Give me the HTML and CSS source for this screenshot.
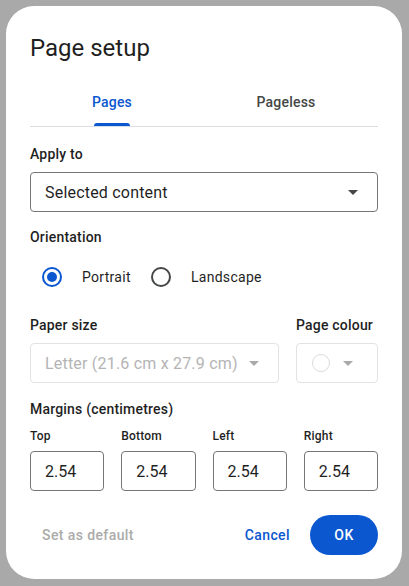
FILE: index.html
```html
<!DOCTYPE html>
<html lang="en">
<head>
<meta charset="utf-8">
<title>Page setup</title>
<link rel="stylesheet" href="styles.css">
</head>
<body>
<div class="dialog">
  <h1 class="title">Page setup</h1>

  <div class="tabs">
    <div class="tab-row">
      <div class="tab active"><span>Pages</span><span class="tab-indicator"></span></div>
      <div class="tab"><span>Pageless</span></div>
    </div>
  </div>

  <div class="label apply">Apply to</div>
  <div class="select">
    <span>Selected content</span>
    <svg class="arrow" width="10" height="5" viewBox="0 0 10 5"><polygon points="0,0 10,0 5,5" fill="#444746"/></svg>
  </div>

  <div class="label orient">Orientation</div>
  <div class="radio-row">
    <div class="radio-opt">
      <span class="radio-touch"><span class="radio-ring on"><span class="radio-dot"></span></span></span>
      <span class="radio-label">Portrait</span>
    </div>
    <div class="radio-opt">
      <span class="radio-touch"><span class="radio-ring"></span></span>
      <span class="radio-label">Landscape</span>
    </div>
  </div>

  <div class="paper-grid">
    <div class="label">Paper size</div>
    <div class="label">Page colour</div>
    <div class="select disabled">
      <span>Letter (21.6 cm x 27.9 cm)</span>
      <svg class="arrow" width="10" height="5" viewBox="0 0 10 5"><polygon points="0,0 10,0 5,5" fill="#a9a9a9"/></svg>
    </div>
    <div class="colour-box">
      <span class="swatch"></span>
      <svg class="arrow colour-arrow" width="10" height="5" viewBox="0 0 10 5"><polygon points="0,0 10,0 5,5" fill="#a9a9a9"/></svg>
    </div>
  </div>

  <div class="label margins-title">Margins (centimetres)</div>
  <div class="margin-grid">
    <div class="small-label">Top</div>
    <div class="small-label">Bottom</div>
    <div class="small-label">Left</div>
    <div class="small-label">Right</div>
    <div class="num">2.54</div>
    <div class="num">2.54</div>
    <div class="num">2.54</div>
    <div class="num">2.54</div>
  </div>

  <div class="footer">
    <button class="btn-text default-btn">Set as default</button>
    <span class="spacer"></span>
    <button class="btn-text cancel-btn">Cancel</button>
    <button class="btn-ok">OK</button>
  </div>
</div>
</body>
</html>
```

FILE: styles.css
```css
body {
  margin: 0;
  background: #a9a9a9;
  font-family: Roboto, "Liberation Sans", sans-serif;
  color: #1f1f1f;
}

.dialog {
  margin: 6px;
  width: 396px;
  height: 573px;
  box-sizing: border-box;
  background: #ffffff;
  border-radius: 28px;
  padding: 26px 24px 24px;
  display: flex;
  flex-direction: column;
}

.title {
  margin: 0;
  font-size: 24px;
  font-weight: 400;
  line-height: 32px;
  color: #1f1f1f;
}

.tabs {
  margin-top: 14px;
  border-bottom: 1px solid #dadce0;
}

.tab-row {
  display: flex;
  margin: 0 5px 0 -5px;
}

.tab {
  flex: 1;
  height: 48px;
  box-sizing: border-box;
  padding-top: 14px;
  display: flex;
  flex-direction: column;
  align-items: center;
  font-size: 14px;
  font-weight: 500;
  line-height: 20px;
  letter-spacing: 0.2px;
  color: #444746;
}

.tab.active {
  color: #0b57d0;
}

.tab-indicator {
  margin-top: auto;
  width: 36px;
  height: 3px;
  background: #0b57d0;
  border-radius: 3px 3px 0 0;
}

.label {
  font-size: 14px;
  font-weight: 500;
  line-height: 20px;
  letter-spacing: 0.2px;
  color: #1f1f1f;
}

.apply {
  margin-top: 17px;
}

.select {
  margin-top: 8px;
  height: 40px;
  box-sizing: border-box;
  border: 1px solid #747775;
  border-radius: 4px;
  padding: 0 19px 0 14px;
  display: flex;
  align-items: center;
  justify-content: space-between;
  font-size: 16px;
  letter-spacing: 0.2px;
  color: #1f1f1f;
}

.arrow {
  display: block;
  flex: none;
}

.orient {
  margin-top: 15px;
}

.radio-row {
  margin-top: 10px;
  padding-left: 2px;
  display: flex;
  align-items: center;
}

.radio-opt {
  display: flex;
  align-items: center;
}

.radio-touch {
  width: 40px;
  height: 40px;
  display: flex;
  align-items: center;
  justify-content: center;
}

.radio-ring {
  width: 20px;
  height: 20px;
  box-sizing: border-box;
  border: 2px solid #444746;
  border-radius: 50%;
  display: flex;
  align-items: center;
  justify-content: center;
}

.radio-ring.on {
  border-color: #0b57d0;
}

.radio-dot {
  width: 10px;
  height: 10px;
  border-radius: 50%;
  background: #0b57d0;
}

.radio-label {
  margin-left: 10px;
  margin-right: 10px;
  font-size: 14px;
  line-height: 20px;
  letter-spacing: 0.3px;
  color: #1f1f1f;
}

.paper-grid {
  margin-top: 18px;
  display: grid;
  grid-template-columns: 1fr 82px;
  column-gap: 17px;
  row-gap: 8px;
}

.paper-grid .select {
  margin-top: 0;
}

.select.disabled {
  border-color: #e3e3e3;
  color: #b4b4b4;
}

.colour-box {
  height: 40px;
  box-sizing: border-box;
  border: 1px solid #e3e3e3;
  border-radius: 4px;
  padding-left: 15px;
  display: flex;
  align-items: center;
}

.swatch {
  width: 18px;
  height: 18px;
  box-sizing: border-box;
  border: 1px solid #dcdcdc;
  border-radius: 50%;
  background: #ffffff;
}

.colour-arrow {
  margin-left: 13px;
}

.margins-title {
  margin-top: 16px;
}

.margin-grid {
  margin-top: 9px;
  display: grid;
  grid-template-columns: repeat(4, 1fr);
  column-gap: 17px;
  row-gap: 7px;
}

.small-label {
  font-size: 12px;
  font-weight: 500;
  line-height: 16px;
  letter-spacing: 0.2px;
  color: #1f1f1f;
}

.num {
  height: 40px;
  box-sizing: border-box;
  border: 1px solid #747775;
  border-radius: 4px;
  padding-left: 14px;
  display: flex;
  align-items: center;
  font-size: 16px;
  color: #1f1f1f;
}

.footer {
  margin-top: 24px;
  height: 40px;
  display: flex;
  align-items: center;
}

.spacer {
  flex: 1;
}

.btn-text,
.btn-ok {
  font-family: Roboto, "Liberation Sans", sans-serif;
  font-size: 14px;
  font-weight: 500;
  letter-spacing: 0.4px;
  height: 40px;
  border: none;
  background: none;
  cursor: pointer;
}

.btn-text {
  padding: 0 12px;
}

.default-btn {
  color: #ababab;
}

.cancel-btn {
  color: #0b57d0;
}

.btn-ok {
  margin-left: 8px;
  min-width: 68px;
  padding: 0 24px;
  border-radius: 20px;
  background: #0b57d0;
  color: #ffffff;
}
```
